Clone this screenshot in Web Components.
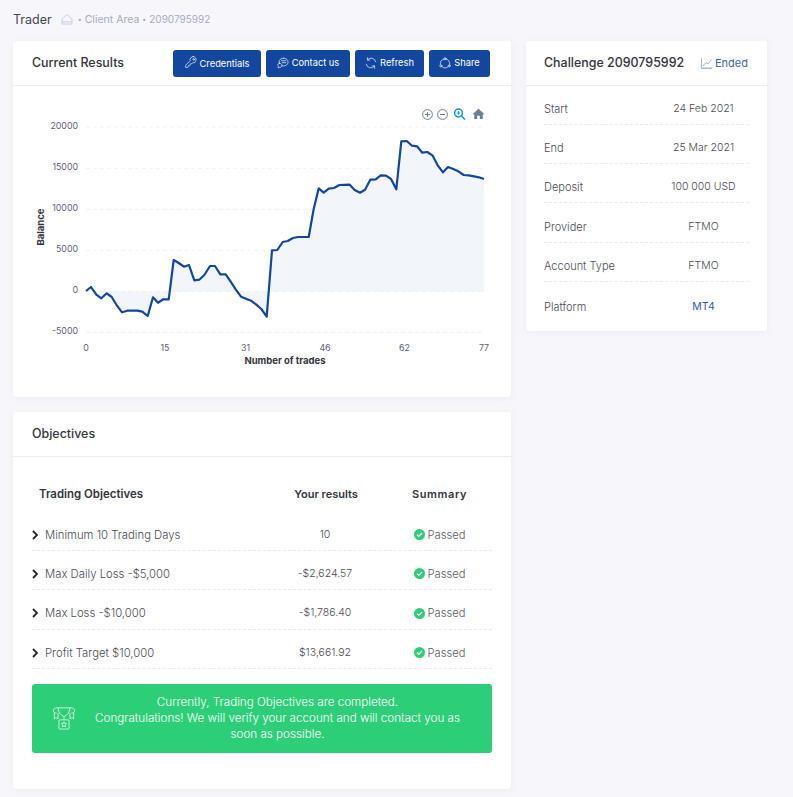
<!DOCTYPE html>
<html lang="en"><head><meta charset="utf-8"><title>Trader</title>
<style>
html,body{margin:0;padding:0;background:#f7f7fb}
body{font-family:Inter,"Open Sans",sans-serif;color:#3a3a46;width:793px;height:797px;overflow:hidden}
</style></head><body>
<x-app></x-app>
<script>
const ICONS={
key:'<path d="M11 .8a4.200 4.200 0 0 0-4.100 5.400L.8 12.300V15.200h3l.6-.6v-1.700h1.700l.8-.8v-1.500h1.500l1.300-1.300A4.200 4.200 0 1 0 11 .8z"/><circle cx="11.500" cy="4.500" r="1"/>',
chat:'<path d="M8.800 1.500c3.300 0 6 2.300 6 5.200s-2.700 5.200-6 5.200c-.8 0-1.500-.1-2.200-.4"/><path d="M3 8.800C2.900 8.300 2.800 7.500 2.800 6.700c0-2.900 2.700-5.200 6-5.200"/><path d="M3.300 8.300c1.800 0 3.200 1.300 3.200 2.900s-1.400 2.900-3.200 2.900H1.200l.9-1.300c-.6-.5-1-1-1-1.700 0-1.500 1-2.800 2.200-2.800z"/><path d="M6 5h5.800M7 7.600h4.800"/>',
refresh:'<path d="M14.300 6.300A6.300 6.300 0 0 0 3.300 3.800M1.700 9.700a6.300 6.300 0 0 0 11 2.500"/><path d="M3.200 .9v3.200h3.200M12.800 15.100v-3.200H9.600"/>',
share:'<circle cx="8" cy="2.300" r="1.400"/><circle cx="2.400" cy="11.800" r="1.400"/><circle cx="13.600" cy="11.800" r="1.400"/><path d="M6.500 2.800A6.300 6.300 0 0 0 1.800 9.800M9.500 2.800a6.300 6.300 0 0 1 4.700 7M3.800 12.900a6.300 6.300 0 0 0 8.400 0"/>'
};
function def(name,fn){customElements.define(name,class extends HTMLElement{
  connectedCallback(){ if(this.shadowRoot) return; this.attachShadow({mode:'open'}).innerHTML=fn(this); }
});}

def('x-btn',el=>`<style>
:host{display:inline-flex;box-sizing:border-box;height:27px;background:#13479f;border-radius:3px;color:#fff;align-items:center;justify-content:center;gap:3px;font-size:9.300px;width:${el.getAttribute('w')}px;padding-bottom:${el.getAttribute('pb')||2}px}
svg{width:12px;height:12px;fill:none;stroke:#e6ecf7;stroke-width:1;stroke-linejoin:round;stroke-linecap:round;margin-top:${el.getAttribute('pb')?-2:2}px}
</style><svg viewBox="0 0 16 16">${ICONS[el.getAttribute('icon')]}</svg><slot></slot>`);

def('x-card',el=>`<style>
:host{display:block;background:#fff;border-radius:3px;box-shadow:0 1px 8px rgba(120,125,170,.10)}
header{box-sizing:border-box;height:45px;border-bottom:1px solid #ebedf3;display:flex;align-items:center;justify-content:space-between;padding:0 ${el.getAttribute('hpr')||19}px 0 ${el.getAttribute('hpl')||19}px;font-size:12.450px;font-weight:500;color:#34343e}
.tt{margin-bottom:2px}
.act{display:flex;align-items:center;gap:5px;font-weight:400}
</style><header><span class="tt"><slot name="title"></slot></span><div class="act"><slot name="actions"></slot></div></header><slot></slot>`);

def('x-crumb',()=>`<style>
:host{display:flex;align-items:center;height:41px;box-sizing:border-box;padding:0 0 3px 13px;font-size:10px;color:#a6a9c6;font-weight:400}
b{font-weight:400;font-size:12.500px;color:#44444f;margin-right:9px}
svg{width:12px;height:12px;fill:none;stroke:#c8cce4;stroke-width:1;margin-right:5px}
i{font-style:normal;font-size:7px;margin:0 3px 0 0}
.c{font-size:10.500px;margin-right:3px}
.n{font-size:10px}
</style><b>Trader</b><svg viewBox="0 0 12 12"><path d="M1 11V6.200L6 1.500l5 4.700V11zM1 8.800h10"/></svg><i>•</i><span class="c">Client Area</span><i>•</i><span class="n">2090795992</span>`);

def('x-chart',()=>{
 const L=[[198,543],[213,531],[229,554],[244,565],[260,550],[275,561],[291,587],[306,607],[322,602],[352,602],[367,605],[383,618],[399,562],[414,578],[430,568],[446,568],[461,450],[476,459],[492,470],[507,465],[523,511],[538,509],[553,495],[570,468],[585,468],[601,493],[617,493],[632,515],[647,538],[663,560],[678,566],[693,572],[709,584],[724,597],[740,620]].map(p=>[20+p[0]/3,110+p[1]/3]);
 const R=[[66,421],[82,420],[98,396],[113,393],[129,384],[144,381],[176,381],[191,297],[206,235],[221,248],[236,236],[252,234],[268,225],[299,224],[314,240],[330,248],[345,239],[361,209],[377,208],[392,196],[408,197],[423,207],[439,238],[454,94],[470,93],[486,107],[501,109],[517,128],[532,126],[548,137],[563,166],[579,187],[594,171],[610,177],[625,184],[641,195],[656,196],[672,199],[687,202],[702,207]].map(p=>[250+p[0]/3,110+p[1]/3]);
 const pts=L.concat(R).map(p=>p[0].toFixed(1)+','+p[1].toFixed(1));
 const ys=[[20000,127],[15000,168.300],[10000,209.300],[5000,250.400],[0,291.400],[-5000,332.500]];
 const xs=[[0,86],[15,165],[31,245.500],[46,325],[62,404.500],[77,484]];
 return `<style>:host{display:block;height:311px}svg{display:block;width:498px;height:311px}
 text{font-family:Inter,"Open Sans",sans-serif;font-size:8.800px;fill:#5f607c}
 .t{font-weight:700;fill:#34343e;font-size:9.500px}</style>
 <svg viewBox="13 86 498 311">
 ${ys.map(y=>`<line x1="86" x2="484" y1="${y[1]}" y2="${y[1]}" stroke="#f0f1f5" stroke-dasharray="4 3"/>`).join('')}
 <polygon fill="#f2f6fb" points="86,291.4 ${pts.join(' ')} 484,291.4"/>
 <line x1="86" x2="484" y1="291.400" y2="291.400" stroke="#eef0f6" stroke-dasharray="4 3"/>
 <polyline fill="none" stroke="#13479f" stroke-width="2.200" stroke-linejoin="round" points="${pts.join(' ')}"/>
 ${ys.map(y=>`<text x="78" y="${y[1]+1.800}" text-anchor="end">${y[0]===-5000?'-5000':y[0]}</text>`).join('')}
 ${xs.map(x=>`<text x="${x[1]}" y="350.500" text-anchor="middle">${x[0]}</text>`).join('')}
 <text class="t" x="285" y="363.500" text-anchor="middle">Number of trades</text>
 <text class="t" transform="translate(43.500 227) rotate(-90)" text-anchor="middle">Balance</text>
 <g fill="none" stroke="#6e8192" stroke-width="1">
  <circle cx="427.500" cy="114.500" r="4.900"/><path d="M425 114.500h5M427.500 112v5"/>
  <circle cx="442.500" cy="114.500" r="4.900"/><path d="M440 114.500h5"/>
 </g>
 <g fill="none" stroke="#0b8fee" stroke-width="1.500"><circle cx="458.500" cy="113" r="3.900"/><path d="M461.500 116l3.500 3.500"/><path d="M456.700 113h3.600M458.500 111.200v3.600" stroke-width=".9"/></g>
 <path fill="#6e8192" d="M478.500 108.800l-6 5.400h1.700v4.800h3v-3.200h2.600v3.200h3v-4.800h1.700z"/>
 </svg>`;
});

def('x-info',el=>`<style>
:host{display:grid;grid-template-columns:114px 91px;align-items:end;box-sizing:border-box;height:${el.hasAttribute('last')?40:39.2}px;border-bottom:${el.hasAttribute('last')?'0':'1px dashed #e9eaf1'};font-size:10.500px;line-height:14px;color:#4c4c58;padding-bottom:${el.hasAttribute('last')?8:8}px;font-weight:300}
.k{font-size:11px}
.v{text-align:center;color:${el.hasAttribute('link')?'#2f5aa8':'inherit'};font-weight:${el.hasAttribute('link')?400:300}}
</style><span class="k">${el.getAttribute('k')}</span><span class="v">${el.getAttribute('v')}</span>`);

def('x-obj',el=>`<style>
:host{display:grid;grid-template-columns:231px 124px 105px;align-items:start;box-sizing:border-box;height:39.330px;border-bottom:1px dashed #e9eaf1;font-size:10.500px;color:#4c4c58;padding-top:16px;line-height:14px;font-weight:300}
.n{display:flex;align-items:center;gap:7px;font-size:11.300px}
.c{text-align:center}
.p{display:flex;justify-content:center;align-items:center;gap:3px;color:#5c5c68;font-size:11.200px}
svg.ch{width:6px;height:10px;fill:none;stroke:#24242c;stroke-width:1.800}
svg.ok{width:11px;height:11px}
</style><div class="n"><svg class="ch" viewBox="0 0 6 10"><path d="M1 1l4 4-4 4"/></svg><span>${el.getAttribute('n')}</span></div><div class="c">${el.getAttribute('r')}</div>
<div class="p"><svg class="ok" viewBox="0 0 11 11"><circle cx="5.500" cy="5.500" r="5.500" fill="#2ccf77"/><path d="M3 5.600l1.800 1.800L8 4" fill="none" stroke="#fff" stroke-width="1.300"/></svg><span>Passed</span></div>`);

def('x-thead',()=>`<style>
:host{display:grid;grid-template-columns:231px 124px 105px;box-sizing:border-box;height:54.670px;padding-top:28px;line-height:18px;font-size:11px;font-weight:600;color:#34343e}
div{text-align:center}
.f{text-align:left;padding-left:7px;font-size:11.450px}
.y{padding-left:2px}
.s{letter-spacing:.6px}
</style><div class="f">Trading Objectives</div><div class="y">Your results</div><div class="s">Summary</div>`);

def('x-alert',()=>`<style>
:host{display:flex;align-items:center;box-sizing:border-box;height:69px;background:#2ccf77;border-radius:3px;color:#fff;font-size:11.650px;line-height:16px;margin-top:15px;padding:0 27px 0 20px;font-weight:300}
svg{width:24px;height:24px;fill:none;stroke:#e3f9ec;stroke-width:.9;flex:none;margin:0 14px 0 0}
div{flex:1;text-align:center;white-space:nowrap}
</style><svg viewBox="0 0 26 26"><path d="M5 2h16M6.500 2c.5 5 3 8 6.500 9.500C16.500 10 19 7 19.500 2"/><path d="M5 2C2.800 2 1.500 3.500 1.500 5S3 8 5 7.500M21 2c2.200 0 3.500 1.500 3.500 3S23 8 21 7.500"/><path d="M2.500 7v7l2-1.300L6.500 14V7.500M23.500 7v7l-2-1.300-2 1.300V7.500"/><path d="M13 11.500V15"/><rect x="7.500" y="15" width="11" height="10" rx="1"/><path d="M13 17l.9 1.900 2 .2-1.500 1.400.4 2-1.800-1-1.800 1 .4-2-1.500-1.400 2-.2z"/></svg><div><slot></slot></div>`);

def('x-app',()=>`<style>
:host{display:block}
.grid{display:grid;grid-template-columns:498px 241px;gap:15px;padding-left:13px;align-items:start}
.l{display:flex;flex-direction:column;gap:15px}
.info{padding:0 18px 9px;margin-top:-.2px}
.obj{padding:0 19px 36px;}
.a{color:#3f66b0;display:flex;align-items:center;gap:3px;font-size:11px}
.a svg{width:11px;height:11px;fill:none;stroke:#8ea6d4;stroke-width:.8}
</style>
<x-crumb></x-crumb>
<div class="grid"><div class="l">
 <x-card hpr="21">
  <span slot="title">Current Results</span>
  <x-btn slot="actions" icon="key" w="88" pb="0">Credentials</x-btn>
  <x-btn slot="actions" icon="chat" w="84">Contact us</x-btn>
  <x-btn slot="actions" icon="refresh" w="69">Refresh</x-btn>
  <x-btn slot="actions" icon="share" w="61">Share</x-btn>
  <x-chart></x-chart>
 </x-card>
 <x-card>
  <span slot="title">Objectives</span>
  <div class="obj">
   <x-thead></x-thead>
   <x-obj n="Minimum 10 Trading Days" r="10"></x-obj>
   <x-obj n="Max Daily Loss -$5,000" r="-$2,624.57"></x-obj>
   <x-obj n="Max Loss -$10,000" r="-$1,786.40"></x-obj>
   <x-obj n="Profit Target $10,000" r="$13,661.92"></x-obj>
   <x-alert>Currently, Trading Objectives are completed.<br>Congratulations! We will verify your account and will contact you as<br>soon as possible.</x-alert>
  </div>
 </x-card>
</div>
<x-card hpl="18">
 <span slot="title">Challenge 2090795992</span>
 <span slot="actions" class="a"><svg viewBox="0 0 11 11"><path d="M.5 0v10.500H11M2 8l3-3.500 2 1.500 3.500-4.500"/><path d="M2 10V9M4 10V9M6 10V9M8 10V9M10 10V9"/></svg>Ended</span>
 <div class="info">
  <x-info k="Start" v="24 Feb 2021"></x-info>
  <x-info k="End" v="25 Mar 2021"></x-info>
  <x-info k="Deposit" v="100 000 USD"></x-info>
  <x-info k="Provider" v="FTMO"></x-info>
  <x-info k="Account Type" v="FTMO"></x-info>
  <x-info k="Platform" v="MT4" last link></x-info>
 </div>
</x-card>
</div>`);
</script>
</body></html>
